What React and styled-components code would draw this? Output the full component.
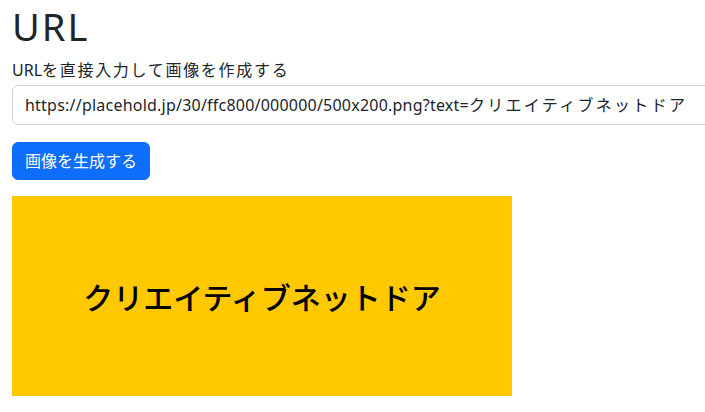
import React from "react";
import styled, { createGlobalStyle } from "styled-components";

const Global = createGlobalStyle`
  html, body { margin: 0; padding: 0; overflow: hidden; background: #fff; }
  body {
    font-family: "Noto Sans", "Noto Sans CJK JP", sans-serif;
    font-size: 16px;
    line-height: 1.5;
    color: #212529;
  }
  * { box-sizing: border-box; }
`;

const Page = styled.div`
  padding: 2px 12px 0;
  width: 740px;
`;

const Title = styled.h1`
  margin: 0 0 8px;
  font-size: 38px;
  font-weight: 400;
  letter-spacing: 2px;
  line-height: 48px;
  color: #212529;
`;

const Field = styled.div`
  display: flex;
  flex-direction: column;
  margin-bottom: 17px;
`;

const Label = styled.label`
  font-size: 16px;
  line-height: 24px;
  margin-bottom: 3px;
  color: #212529;
`;

const Wide = styled.span`
  letter-spacing: ${(p) => p.$spacing || "1.6px"};
`;

const TextBox = styled.div`
  width: 100%;
  height: 40px;
  padding: 0 12px;
  display: flex;
  align-items: center;
  font-size: 16px;
  color: #212529;
  white-space: nowrap;
  overflow: hidden;
  border: 1px solid #ced4da;
  border-radius: 6px;
  background: #fff;
`;

const Latin = styled.span`
  letter-spacing: 0.22px;
`;

const Button = styled.button`
  display: inline-block;
  height: 38px;
  padding: 6px 12px;
  font: inherit;
  font-size: 16px;
  line-height: 24px;
  color: #fff;
  background: #0d6efd;
  border: 1px solid #0d6efd;
  border-radius: 6px;
  cursor: pointer;
`;

const Preview = styled.div`
  margin-top: 16px;
  width: 500px;
  height: 200px;
  background: #ffc800;
  color: #000;
  display: flex;
  align-items: center;
  justify-content: center;
  font-family: "Noto Sans CJK JP", sans-serif;
  font-size: 30px;
  font-weight: 500;
`;

export default function App() {
  return (
    <>
      <Global />
      <Page>
        <Title>URL</Title>
        <Field>
          <Label htmlFor="url">
            URL<Wide $spacing="1.7px">を直接入力して画像を作成する</Wide>
          </Label>
          <TextBox id="url" role="textbox">
            <Latin>https://placehold.jp/30/ffc800/000000/500x200.png?text=</Latin>
            <Wide $spacing="2.3px">クリエイティブネットドア</Wide>
          </TextBox>
        </Field>
        <Button>画像を生成する</Button>
        <Preview>クリエイティブネットドア</Preview>
      </Page>
    </>
  );
}
